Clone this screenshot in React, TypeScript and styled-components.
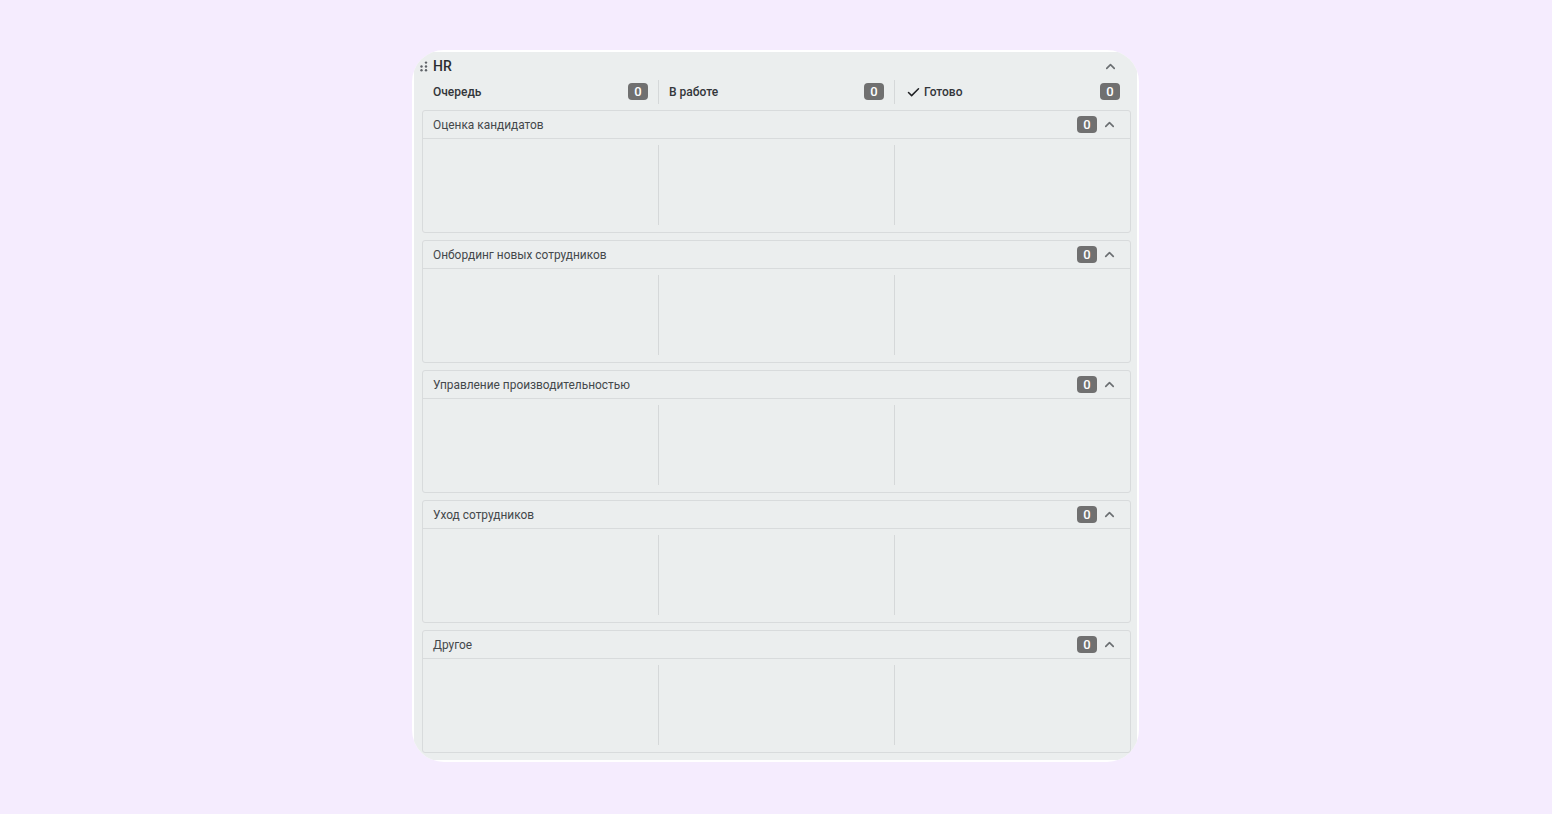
import styled, { createGlobalStyle } from "styled-components";
import { FiCheck, FiChevronUp } from "react-icons/fi";

const categories = [
  "Оценка кандидатов",
  "Онбординг новых сотрудников",
  "Управление производительностью",
  "Уход сотрудников",
  "Другое",
];

const columns = [
  { title: "Очередь", done: false },
  { title: "В работе", done: false },
  { title: "Готово", done: true },
];

const GripIcon = () => (
  <svg width="8" height="11" viewBox="0 0 8 11" fill="#5f6368">
    <circle cx="1.5" cy="5.5" r="1.2" />
    <circle cx="1.5" cy="9.2" r="1.2" />
    <circle cx="6" cy="1.6" r="1.2" />
    <circle cx="6" cy="5.5" r="1.2" />
    <circle cx="6" cy="9.2" r="1.2" />
  </svg>
);

const App = () => {
  return (
    <Page>
      <GlobalStyle />
      <Frame>
        <Board>
          <BoardHeader>
            <Grip>
              <GripIcon />
            </Grip>
            <BoardTitle>HR</BoardTitle>
            <BoardToggle>
              <FiChevronUp />
            </BoardToggle>
          </BoardHeader>
          <ColumnRow>
            {columns.map((column) => (
              <ColumnHead key={column.title}>
                <ColumnTitle>
                  {column.done && <FiCheck />}
                  {column.title}
                </ColumnTitle>
                <ColumnCount>0</ColumnCount>
              </ColumnHead>
            ))}
          </ColumnRow>
          <SectionList>
            {categories.map((name) => (
              <Section key={name}>
                <SectionHeader>
                  <SectionName>{name}</SectionName>
                  <Count>0</Count>
                  <SectionToggle>
                    <FiChevronUp />
                  </SectionToggle>
                </SectionHeader>
                <SectionBody>
                  <Cell />
                  <Cell />
                  <Cell />
                </SectionBody>
              </Section>
            ))}
          </SectionList>
        </Board>
      </Frame>
    </Page>
  );
};

export default App;

const GlobalStyle = createGlobalStyle`
  html, body {
    margin: 0;
    padding: 0;
    background: #f5ecfe;
  }
  * {
    box-sizing: border-box;
  }
`;

const Page = styled.div`
  width: 1552px;
  height: 814px;
  padding: 50px 0 0 412px;
  overflow: hidden;
  display: flex;
  align-items: flex-start;
  background: #f5ecfe;
  font-family: Roboto, "Liberation Sans", sans-serif;
  color: #202124;
`;

/* white edge only shows on the straight sides, the round corners cut through to the grey */
const Frame = styled.div`
  width: 727px;
  height: 712px;
  padding: 2px;
  background: #ffffff;
  border-radius: 32px;
  overflow: hidden;
`;

const Board = styled.div`
  height: 100%;
  padding: 1px 6px 0 8px;
  background: #ebeeee;
  overflow: hidden;
`;

const BoardHeader = styled.div`
  height: 26px;
  display: flex;
  align-items: center;
`;

const Grip = styled.span`
  width: 13px;
  margin-left: -2px;
  display: flex;
  align-items: center;
`;

const BoardTitle = styled.span`
  flex: 1;
  font-size: 14px;
  font-weight: 500;
  color: #2a2d30;
`;

const BoardToggle = styled.span`
  width: 15px;
  margin-right: 13px;
  display: flex;
  color: #6b6f72;
  font-size: 15px;
  svg {
    stroke-width: 2.6;
  }
`;

const ColumnRow = styled.div`
  display: grid;
  grid-template-columns: 237px 236px 236px;
  height: 31px;
  padding-top: 1px;
  align-items: start;
`;

const ColumnHead = styled.div`
  height: 24px;
  padding: 0 10px;
  display: flex;
  align-items: center;
  justify-content: space-between;
  &:first-child {
    padding-left: 11px;
  }
  &:last-child {
    padding-right: 11px;
  }
  &:not(:last-child) {
    border-right: 1px solid #d5d8d9;
  }
`;

const ColumnTitle = styled.span`
  display: flex;
  align-items: center;
  gap: 3px;
  font-size: 12px;
  font-weight: 500;
  color: #33363a;
  svg {
    margin-left: 1px;
    font-size: 15px;
    stroke-width: 2.4;
    color: #202124;
  }
`;

const Count = styled.span`
  width: 20px;
  height: 17px;
  display: flex;
  align-items: center;
  justify-content: center;
  border-radius: 4px;
  background: #707070;
  color: #ffffff;
  font-size: 13px;
  font-weight: 500;
`;

const ColumnCount = styled(Count)`
  margin-top: -1px;
`;

const SectionList = styled.div`
  display: flex;
  flex-direction: column;
  gap: 7px;
`;

const Section = styled.section`
  height: 123px;
  flex: none;
  border: 1px solid #d8dbdc;
  border-radius: 3px;
`;

const SectionHeader = styled.div`
  height: 28px;
  padding: 0 13px 0 10px;
  display: flex;
  align-items: center;
  border-bottom: 1px solid #d8dbdc;
`;

const SectionName = styled.span`
  flex: 1;
  font-size: 11.9px;
  color: #44484b;
`;

const SectionToggle = styled.span`
  width: 15px;
  margin-left: 5px;
  display: flex;
  color: #6b6f72;
  font-size: 15px;
  svg {
    stroke-width: 2.6;
  }
`;

const SectionBody = styled.div`
  display: grid;
  grid-template-columns: 236px 236px 1fr;
  padding-top: 6px;
`;

const Cell = styled.div`
  height: 80px;
  &:not(:last-child) {
    border-right: 1px solid #d5d8d9;
  }
`;
